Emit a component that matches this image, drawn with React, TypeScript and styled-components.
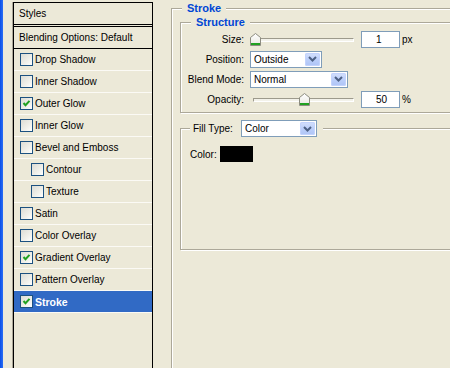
import React from 'react';
import styled, { createGlobalStyle } from 'styled-components';

const GlobalStyle = createGlobalStyle`
  html, body {
    margin: 0;
    padding: 0;
    background: #ece9d8;
    overflow: hidden;
  }
  body {
    font-family: "Liberation Sans", Arial, sans-serif;
    font-size: 10px;
    color: #000;
  }
`;

const Window = styled.div`
  display: flex;
  height: 368px;
  overflow: hidden;
`;

const FrameEdge = styled.div`
  width: 3px;
  flex: none;
  background: linear-gradient(90deg, #0a4ee6, #2a6ef5);
`;

const StylesList = styled.div`
  flex: none;
  width: 138px;
  margin: 2px 0 0 10px;
  border: 1px solid #000;
  border-bottom: none;
  box-shadow: -1px 0 0 #aca899;
  height: 400px;
`;

const HeadRow = styled.div<{ $double?: boolean }>`
  height: 21px;
  display: flex;
  align-items: center;
  padding-left: 5px;
  border-bottom: ${(p) => (p.$double ? '3px double #000' : '1px solid #000')};
`;

const EffectRow = styled.div<{ $indent?: boolean; $selected?: boolean }>`
  height: 21px;
  display: flex;
  align-items: center;
  gap: 2px;
  padding-left: ${(p) => (p.$indent ? '17px' : '6px')};
  border-bottom: 1px solid #fbfaf5;
  background: ${(p) => (p.$selected ? '#316ac5' : 'transparent')};
  color: ${(p) => (p.$selected ? '#fff' : '#000')};
  font-weight: ${(p) => (p.$selected ? 'bold' : 'normal')};
  font-size: ${(p) => (p.$selected ? '10.5px' : '10px')};
`;

const Box = styled.span`
  width: 11px;
  height: 11px;
  flex: none;
  border: 1px solid #1c5180;
  background: linear-gradient(135deg, #dcdcd5 0%, #f0f0ea 60%, #fff 100%);
  display: flex;
  align-items: center;
  justify-content: center;
`;

const Checkbox: React.FC<{ checked?: boolean }> = ({ checked }) => (
  <Box>
    {checked && (
      <svg width="9" height="9" viewBox="0 0 9 9">
        <polyline points="1.5,4 3.5,6.2 7.5,1.8" fill="none" stroke="#21a121" strokeWidth="2" />
      </svg>
    )}
  </Box>
);

const RightPane = styled.div`
  flex: 1;
  padding: 1px 0 0 18px;
  overflow: hidden;
`;

// fieldsets keep padding 0 so the legend sits at border + its own margin
const Group = styled.fieldset`
  margin: 0;
  padding: 0;
  min-width: 0;
  border: 1px solid #aca899;
  box-shadow: inset 1px 1px 0 #fff, 1px 1px 0 #fff;
`;

const StrokeGroup = styled(Group)`
  width: 300px;
  height: 420px;
`;

const StrokeBody = styled.div`
  padding-left: 8px;
`;

const StructureGroup = styled(Group)`
  padding-bottom: 3px;
`;

const FillGroup = styled(Group)`
  margin-top: 7px;
  height: 128px;
`;

const Caption = styled.legend`
  margin-left: 10px;
  padding: 0 5px;
  line-height: 14px;
  font-size: 11px;
  font-weight: bold;
  color: #0046d5;
  background: #ece9d8;
  position: relative;
`;

const FillLegend = styled.legend`
  margin-left: 9px;
  padding: 0 6px 0 3px;
  display: flex;
  align-items: center;
  background: #ece9d8;
  position: relative;
`;

const FillLabel = styled.span`
  width: 48px;
  white-space: nowrap;
`;

const FormGrid = styled.div`
  display: grid;
  grid-template-columns: 63px auto;
  grid-auto-rows: 20px;
  column-gap: 6px;
  align-items: center;
`;

const Label = styled.span`
  text-align: right;
  white-space: nowrap;
`;

const Line = styled.div`
  display: flex;
  align-items: center;
`;

const Slider = styled.div`
  position: relative;
  width: 104px;
  height: 13px;
  margin-right: 7px;
`;

const Track = styled.div`
  position: absolute;
  left: 3px;
  right: 0;
  top: 5px;
  height: 2px;
  border-top: 1px solid #9d9a8c;
  border-left: 1px solid #9d9a8c;
  border-bottom: 1px solid #fff;
  border-right: 1px solid #fff;
  background: #f3f2ea;
`;

const Thumb = styled.svg<{ $left: number }>`
  position: absolute;
  top: 0;
  left: ${(p) => p.$left}px;
`;

const SliderControl: React.FC<{ at: number }> = ({ at }) => (
  <Slider>
    <Track />
    <Thumb $left={at} width="11" height="13" viewBox="0 0 11 13">
      <defs>
        <linearGradient id={`tg${at}`} x1="0" y1="0" x2="0" y2="1">
          <stop offset="0" stopColor="#ffffff" />
          <stop offset="1" stopColor="#e8e8e0" />
        </linearGradient>
      </defs>
      <path d="M0.5,4.5 L5.5,0.5 L10.5,4.5 V12.5 H0.5 Z" fill={`url(#tg${at})`} stroke="#8c8c80" />
      <rect x="1" y="10" width="9" height="2" fill="#21a121" />
    </Thumb>
  </Slider>
);

const NumberBox = styled.div`
  width: 37px;
  height: 15px;
  border: 1px solid #7f9db9;
  background: #fff;
  display: flex;
  align-items: center;
  text-indent: 14px;
  margin-right: 2px;
`;

const SelectBox = styled.div<{ $w: number }>`
  width: ${(p) => p.$w - 2}px;
  height: 15px;
  border: 1px solid #7f9db9;
  background: #fff;
  display: flex;
  align-items: center;
  justify-content: space-between;
  text-indent: 3px;
`;

const DropButton = styled.span`
  width: 15px;
  height: 13px;
  margin-right: 1px;
  border-radius: 2px;
  background: linear-gradient(180deg, #d4e0fc 0%, #bccffa 50%, #aec4f6 100%);
  box-shadow: inset 0 0 0 1px #c3d3fd;
  display: flex;
  align-items: center;
  justify-content: center;
  text-indent: 0;
`;

const Select: React.FC<{ value: string; width: number }> = ({ value, width }) => (
  <SelectBox $w={width}>
    <span>{value}</span>
    <DropButton>
      <svg width="9" height="6" viewBox="0 0 9 6">
        <polyline points="1,1 4.5,4.5 8,1" fill="none" stroke="#4d6185" strokeWidth="2" />
      </svg>
    </DropButton>
  </SelectBox>
);

const ColorLine = styled.div`
  display: flex;
  align-items: center;
  gap: 3px;
  padding: 9px 0 0 9px;
`;

const Swatch = styled.div`
  width: 33px;
  height: 16px;
  background: #000;
`;

const effects = [
  { name: 'Drop Shadow' },
  { name: 'Inner Shadow' },
  { name: 'Outer Glow', checked: true },
  { name: 'Inner Glow' },
  { name: 'Bevel and Emboss' },
  { name: 'Contour', indent: true },
  { name: 'Texture', indent: true },
  { name: 'Satin' },
  { name: 'Color Overlay' },
  { name: 'Gradient Overlay', checked: true },
  { name: 'Pattern Overlay' },
  { name: 'Stroke', checked: true, selected: true },
];

const App: React.FC = () => (
  <>
    <GlobalStyle />
    <Window>
      <FrameEdge />
      <StylesList>
        <HeadRow $double>Styles</HeadRow>
        <HeadRow>Blending Options: Default</HeadRow>
        {effects.map((e) => (
          <EffectRow key={e.name} $indent={e.indent} $selected={e.selected}>
            <Checkbox checked={e.checked} />
            {e.name}
          </EffectRow>
        ))}
      </StylesList>
      <RightPane>
        <StrokeGroup>
          <Caption>Stroke</Caption>
          <StrokeBody>
            <StructureGroup>
              <Caption>Structure</Caption>
              <FormGrid>
                <Label>Size:</Label>
                <Line>
                  <SliderControl at={0} />
                  <NumberBox>1</NumberBox>
                  px
                </Line>
                <Label>Position:</Label>
                <Select value="Outside" width={72} />
                <Label>Blend Mode:</Label>
                <Select value="Normal" width={98} />
                <Label>Opacity:</Label>
                <Line>
                  <SliderControl at={49} />
                  <NumberBox>50</NumberBox>
                  %
                </Line>
              </FormGrid>
            </StructureGroup>
            <FillGroup>
              <FillLegend>
                <FillLabel>Fill Type:</FillLabel>
                <Select value="Color" width={76} />
              </FillLegend>
              <ColorLine>
                Color:
                <Swatch />
              </ColorLine>
            </FillGroup>
          </StrokeBody>
        </StrokeGroup>
      </RightPane>
    </Window>
  </>
);

export default App;
